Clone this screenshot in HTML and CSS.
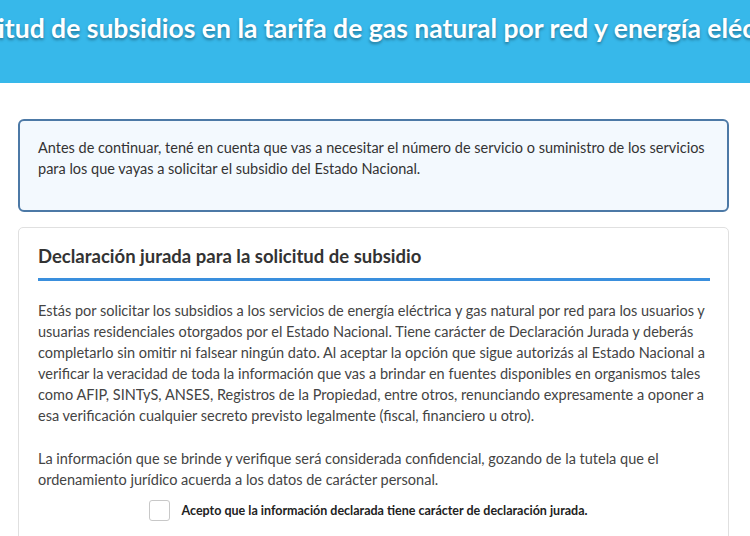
FILE: index.html
```html
<!DOCTYPE html>
<html lang="es">
<head>
<meta charset="utf-8">
<link rel="stylesheet" href="styles.css">
</head>
<body>
<header class="hero">
  <h1 class="hero-title">Solicitud de subsidios en la tarifa de gas natural por red y energía eléctrica</h1>
</header>
<main class="content">
  <div class="alert">
    <p>Antes de continuar, tené en cuenta que vas a necesitar el número de servicio o suministro de los servicios para los que vayas a solicitar el subsidio del Estado Nacional.</p>
  </div>
  <section class="card">
    <h2 class="card-title">Declaración jurada para la solicitud de subsidio</h2>
    <p>Estás por solicitar los subsidios a los servicios de energía eléctrica y gas natural por red para los usuarios y usuarias residenciales otorgados por el Estado Nacional. Tiene carácter de Declaración Jurada y deberás completarlo sin omitir ni falsear ningún dato. Al aceptar la opción que sigue autorizás al Estado Nacional a verificar la veracidad de toda la información que vas a brindar en fuentes disponibles en organismos tales como AFIP, SINTyS, ANSES, Registros de la Propiedad, entre otros, renunciando expresamente a oponer a esa verificación cualquier secreto previsto legalmente (fiscal, financiero u otro).</p>
    <p>La información que se brinde y verifique será considerada confidencial, gozando de la tutela que el ordenamiento jurídico acuerda a los datos de carácter personal.</p>
    <label class="check">
      <span class="box"></span>
      <span class="check-label">Acepto que la información declarada tiene carácter de declaración jurada.</span>
    </label>
  </section>
</main>
</body>
</html>
```
FILE: styles.css
```css
* { box-sizing: border-box; }
html, body { margin: 0; padding: 0; background: #fff; }
body {
  font-family: Lato, "Open Sans", sans-serif;
  color: #333;
  width: 750px;
  overflow: hidden;
}
.hero {
  background: #37b8ea;
  height: 83px;
  display: flex;
  justify-content: center;
  overflow: hidden;
}
.hero-title {
  margin: 0;
  padding-top: 12px;
  white-space: nowrap;
  color: #fff;
  font-size: 26.5px;
  font-weight: 700;
  line-height: 32px;
  text-shadow: 0 2px 3px rgba(0,0,0,0.35);
  flex-shrink: 0;
}
.content {
  padding: 36px 21px 0 18px;
}
.alert {
  background: #f3f9fe;
  border: 2px solid #4c79a6;
  border-radius: 6px;
  height: 93px;
  padding: 16px 18px 0 18px;
}
.alert p {
  margin: 0;
  font-size: 14.5px;
  line-height: 21px;
  color: #333;
}
.card {
  margin-top: 15px;
  border: 1px solid #e0e0e0;
  border-radius: 5px;
  padding: 15px 18px 20px 19px;
  height: 330px;
}
.card-title {
  margin: 0;
  font-size: 18.5px;
  line-height: 26px;
  font-weight: 700;
  color: #333;
  padding-bottom: 9px;
  border-bottom: 3px solid #3a8fdd;
}
.card p {
  margin: 19px 0 0;
  font-size: 14.5px;
  line-height: 21px;
  color: #444;
}
.card p + p {
  margin-top: 22px;
}
.check {
  display: flex;
  align-items: center;
  justify-content: center;
  gap: 12px;
  margin-top: 10px;
  padding-right: 12px;
}
.box {
  width: 21px;
  height: 21px;
  border: 1px solid #c8c8c8;
  border-radius: 3px;
  background: #fff;
}
.check-label {
  font-size: 12.5px;
  font-weight: 700;
  color: #222;
}
```
